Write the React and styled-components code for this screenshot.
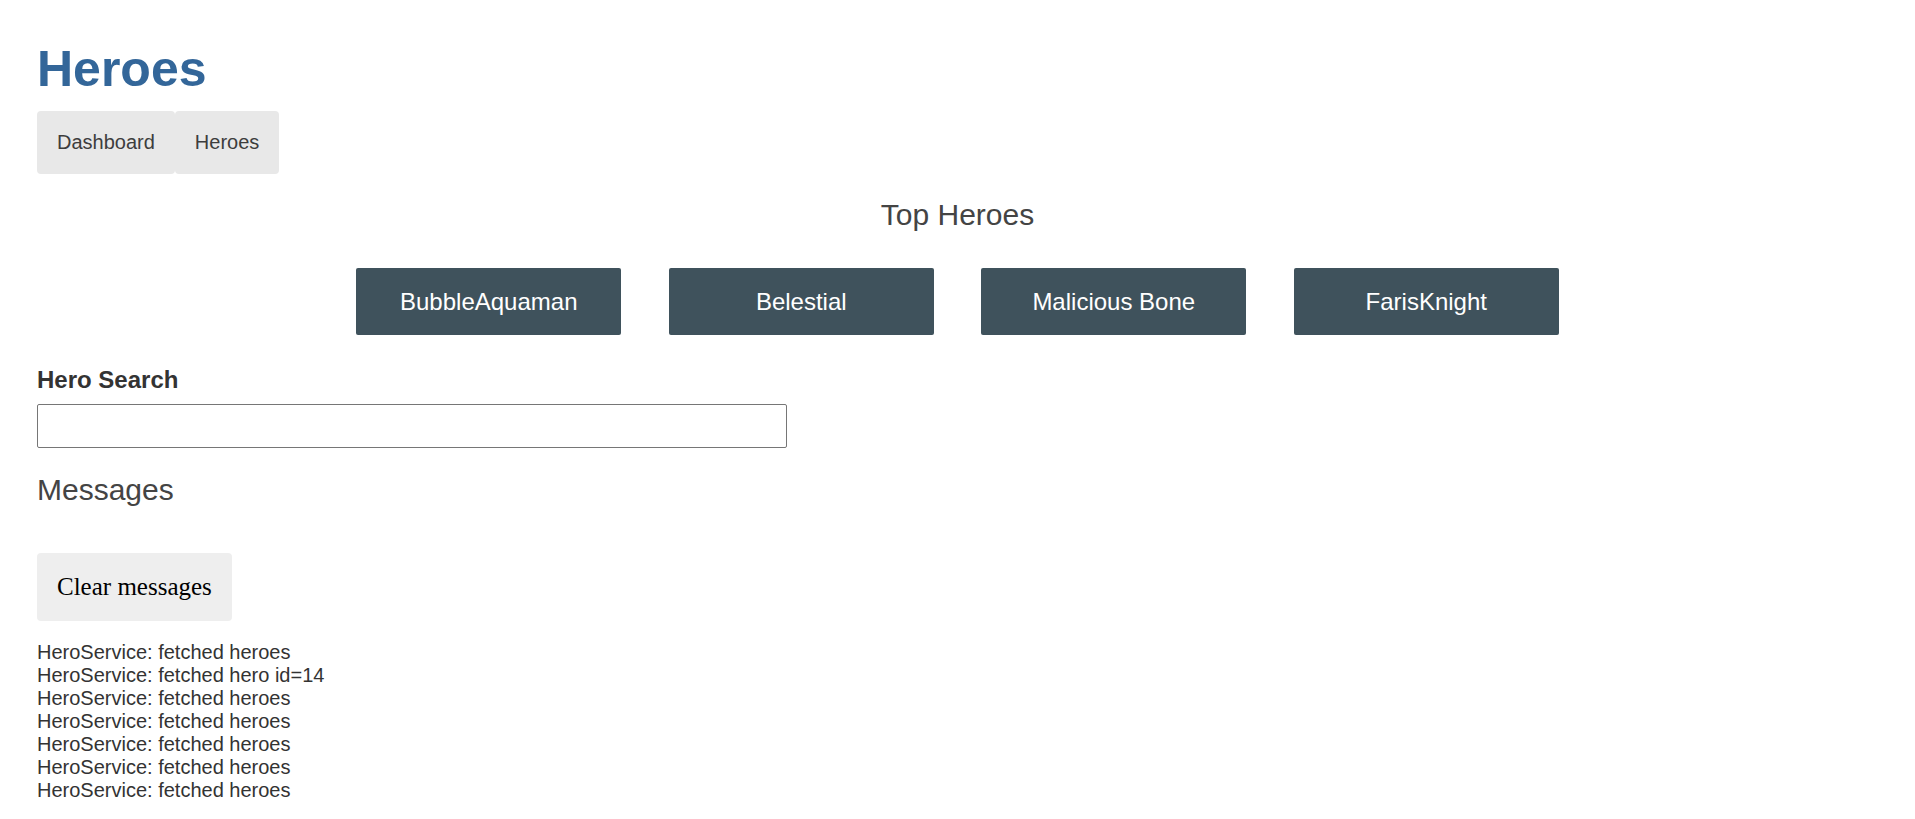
import styled, { createGlobalStyle } from "styled-components";

const GlobalStyle = createGlobalStyle`
  html, body {
    margin: 0;
    padding: 0;
    background: #fff;
  }
  body {
    font-family: "Liberation Sans", Arial, sans-serif;
    color: #333;
  }
`;

const Page = styled.div`
  display: flex;
  flex-direction: column;
  padding: 41px 37px 0;
`;

const Title = styled.h1`
  margin: 0;
  font-family: "Liberation Sans", Arial, sans-serif;
  font-size: 50px;
  line-height: 57.5px;
  font-weight: bold;
  color: #336699;
`;

const Nav = styled.nav`
  display: flex;
  margin-top: 12.5px;
`;

const NavLink = styled.a`
  display: block;
  padding: 20px;
  font-size: 20px;
  line-height: 23px;
  color: #3d3d3d;
  background-color: #e8e8e8;
  border-radius: 4px;
  text-decoration: none;
  cursor: pointer;
`;

const Heading = styled.h2`
  margin: ${(p) => (p.$top ? p.$top : "24px")} 0 0;
  font-family: "Liberation Sans", Arial, sans-serif;
  font-size: 30px;
  line-height: 34.5px;
  font-weight: normal;
  color: #444;
  text-align: ${(p) => (p.$center ? "center" : "left")};
`;

const HeroesMenu = styled.div`
  display: flex;
  justify-content: space-around;
  align-items: flex-start;
  width: 100%;
  max-width: 1250px;
  margin: 25px auto 0;
  padding: 10px 0;
`;

const HeroCard = styled.a`
  box-sizing: border-box;
  width: 265px;
  padding: 20px;
  background-color: #3f525c;
  border-radius: 2px;
  color: #fff;
  font-size: 24px;
  line-height: 27px;
  text-align: center;
  text-decoration: none;
`;

const SearchLabel = styled.label`
  display: block;
  margin-top: 21.5px;
  margin-bottom: 10px;
  font-size: 24px;
  line-height: 27.6px;
  font-weight: bold;
  color: #333;
`;

const SearchInput = styled.input`
  display: block;
  box-sizing: border-box;
  width: 100%;
  max-width: 750px;
  height: 44px;
  padding: 10px;
  border: 1px solid #767676;
  border-radius: 2px;
  font-size: 20px;
  font-family: "Liberation Serif", Georgia, serif;
  outline: none;
`;

const ClearButton = styled.button`
  align-self: flex-start;
  margin-top: 45.5px;
  padding: 20px;
  border: none;
  border-radius: 4px;
  background-color: #eee;
  color: #000;
  font-family: "Liberation Serif", Cambria, Georgia, serif;
  font-size: 25px;
  line-height: 28px;
  cursor: pointer;
`;

const MessageList = styled.div`
  margin-top: 20.5px;
  font-size: 20px;
  line-height: 23px;
  color: #333;
`;

const heroes = ["BubbleAquaman", "Belestial", "Malicious Bone", "FarisKnight"];

const messages = [
  "HeroService: fetched heroes",
  "HeroService: fetched hero id=14",
  "HeroService: fetched heroes",
  "HeroService: fetched heroes",
  "HeroService: fetched heroes",
  "HeroService: fetched heroes",
  "HeroService: fetched heroes",
];

const App = () => {
  return (
    <>
      <GlobalStyle />
      <Page>
        <Title>Heroes</Title>
        <Nav>
          <NavLink>Dashboard</NavLink>
          <NavLink>Heroes</NavLink>
        </Nav>
        <Heading $center>Top Heroes</Heading>
        <HeroesMenu>
          {heroes.map((name) => (
            <HeroCard key={name}>{name}</HeroCard>
          ))}
        </HeroesMenu>
        <SearchLabel htmlFor="search-box">Hero Search</SearchLabel>
        <SearchInput id="search-box" type="text" />
        <Heading $top="25px">Messages</Heading>
        <ClearButton>Clear messages</ClearButton>
        <MessageList>
          {messages.map((m, i) => (
            <div key={i}>{m}</div>
          ))}
        </MessageList>
      </Page>
    </>
  );
};

export default App;
